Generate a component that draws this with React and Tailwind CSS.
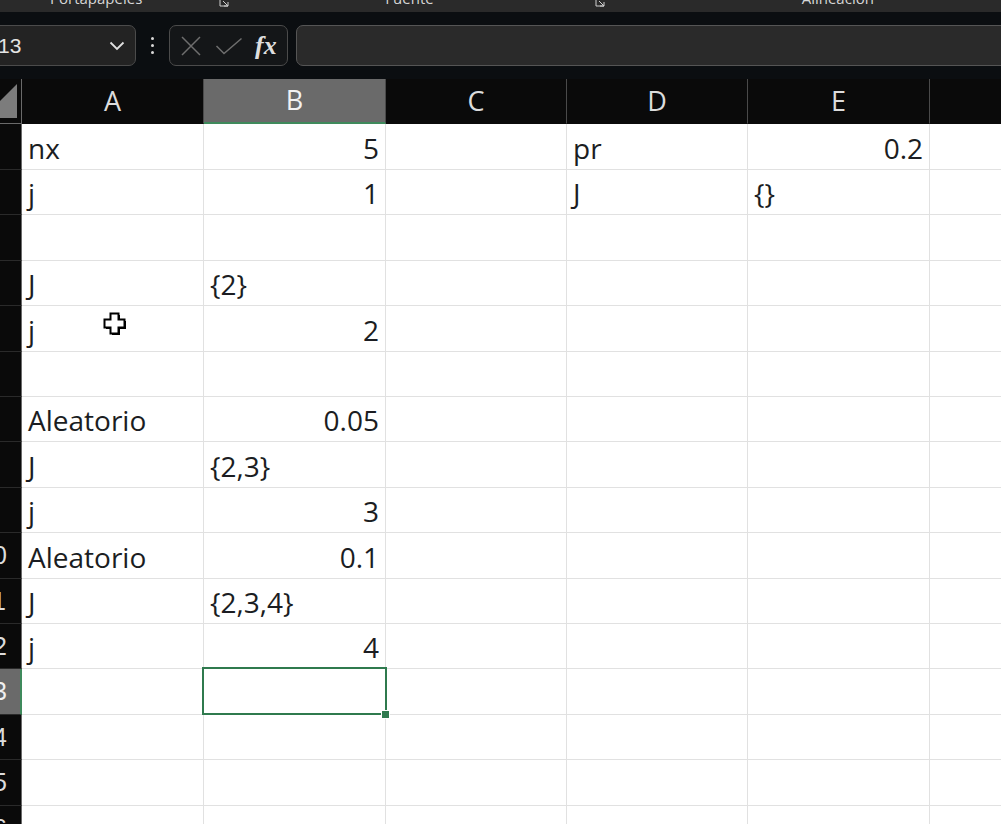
import React from "react";

const COLS = [
  { key: "A", w: "w-[182px]" },
  { key: "B", w: "w-[182px]" },
  { key: "C", w: "w-[181px]" },
  { key: "D", w: "w-[181px]" },
  { key: "E", w: "w-[182px]" },
  { key: "F", w: "w-[93px]" },
];

const HEIGHTS = [46, 45, 46, 45, 46, 45, 45, 46, 45, 46, 45, 45, 46, 45, 46, 45];

const DATA = {
  1: { A: ["nx", "l"], B: ["5", "r"], D: ["pr", "l"], E: ["0.2", "r"] },
  2: { A: ["j", "l"], B: ["1", "r"], D: ["J", "l"], E: ["{}", "l"] },
  4: { A: ["J", "l"], B: ["{2}", "l"] },
  5: { A: ["j", "l"], B: ["2", "r"] },
  7: { A: ["Aleatorio", "l"], B: ["0.05", "r"] },
  8: { A: ["J", "l"], B: ["{2,3}", "l"] },
  9: { A: ["j", "l"], B: ["3", "r"] },
  10: { A: ["Aleatorio", "l"], B: ["0.1", "r"] },
  11: { A: ["J", "l"], B: ["{2,3,4}", "l"] },
  12: { A: ["j", "l"], B: ["4", "r"] },
};

function Launcher() {
  return (
    <svg width="12" height="12" viewBox="0 0 12 12" className="text-[#cfcfcf]">
      <path d="M2 2 V10 H10" fill="none" stroke="currentColor" strokeWidth="1" />
      <path d="M5 5 L10 10 M10 6 V10 H6" fill="none" stroke="currentColor" strokeWidth="1" />
    </svg>
  );
}

function CrossCursor() {
  return (
    <svg width="26" height="26" viewBox="0 0 26 26">
      <path
        d="M8.5 2.5 H16.5 V8.5 H22.5 V16.5 H16.5 V22.5 H8.5 V16.5 H2.5 V8.5 H8.5 Z"
        fill="#000"
        transform="translate(1.5 1.5)"
      />
      <path
        d="M8.5 2.5 H16.5 V8.5 H22.5 V16.5 H16.5 V22.5 H8.5 V16.5 H2.5 V8.5 H8.5 Z"
        fill="#fff"
        stroke="#000"
        strokeWidth="2"
      />
    </svg>
  );
}

export default function App() {
  return (
    <div
      className="w-[1001px] h-[824px] overflow-hidden bg-[#0b0e11] flex flex-col"
      style={{ fontFamily: "'Open Sans', 'Liberation Sans', sans-serif" }}
    >
      {/* ribbon group labels (cut off) */}
      <div className="h-[12px] shrink-0 bg-[#2a2a2a] overflow-hidden">
        <div className="flex items-center -mt-[12px] text-[15px] leading-[20px] text-[#d6d6d6] whitespace-nowrap">
          <span className="ml-[50px]">Portapapeles</span>
          <span className="ml-[76px] mt-[8px]"><Launcher /></span>
          <span className="ml-[155px]">Fuente</span>
          <span className="ml-[160px] mt-[8px]"><Launcher /></span>
          <span className="ml-[196px]">Alineación</span>
        </div>
      </div>

      {/* formula bar */}
      <div className="h-[13px] shrink-0" />
      <div className="h-[41px] shrink-0 flex items-stretch">
        <div className="w-[137px] -ml-[1px] shrink-0 flex items-center justify-between border border-[#4b4b4b] rounded-r-[7px] bg-[#232323] pr-[10px]">
          <span className="text-[21px] text-[#e4e4e4] leading-none -ml-[2px]" style={{ fontFamily: "'Liberation Sans', sans-serif" }}>13</span>
          <svg width="16" height="10" viewBox="0 0 16 10">
            <path d="M1.5 1.5 L8 8 L14.5 1.5" fill="none" stroke="#e0e0e0" strokeWidth="1.8" />
          </svg>
        </div>
        <div className="w-[33px] shrink-0 flex flex-col items-center justify-center gap-[4px]">
          <span className="w-[3px] h-[3px] bg-[#d8d8d8] rounded-full" />
          <span className="w-[3px] h-[3px] bg-[#d8d8d8] rounded-full" />
          <span className="w-[3px] h-[3px] bg-[#d8d8d8] rounded-full" />
        </div>
        <div className="w-[119px] shrink-0 flex items-center border border-[#4b4b4b] rounded-[7px] bg-[#141618] pl-[10px]">
          <svg width="22" height="20" viewBox="0 0 22 20">
            <path d="M2 1 L20 19 M20 1 L2 19" fill="none" stroke="#6e6e6e" strokeWidth="1.5" />
          </svg>
          <svg width="28" height="18" viewBox="0 0 28 18" className="ml-[13px]">
            <path d="M1.5 9 L9 16.5 L26.5 1.5" fill="none" stroke="#6e6e6e" strokeWidth="1.5" />
          </svg>
          <span
            className="ml-[12px] text-[26px] italic font-bold text-[#dedede] leading-none"
            style={{ fontFamily: "'Liberation Serif', serif" }}
          >
            fx
          </span>
        </div>
        <div className="ml-[8px] flex-1 -mr-[10px] border border-[#555] rounded-l-[7px] bg-[#2a2a2a]" />
      </div>
      <div className="h-[13px] shrink-0" />

      {/* grid */}
      <div className="flex-1 flex flex-col overflow-hidden">
        {/* column header */}
        <div className="h-[45px] shrink-0 flex bg-[#0a0a0a]">
          <div className="w-[22px] shrink-0 relative border-r border-[#6a6a6a] border-b">
            <svg width="22" height="44" viewBox="0 0 22 44" className="absolute left-0 top-0">
              <path d="M17 5 L17 39 L0 39 L0 22 Z" fill="#7c7c7c" />
            </svg>
          </div>
          {COLS.map((c, i) => (
            <div
              key={c.key}
              className={`${c.w} shrink-0 flex items-center justify-center text-[27px] leading-none ${
                c.key === "B"
                  ? "bg-[#6a6a6a] text-[#f2f2f2] border-b-[2px] border-[#3f8a5c]"
                  : "text-[#dcdcdc] border-b border-[#0a0a0a]"
              } ${i < COLS.length - 1 ? "border-r border-r-[#4a4a4a]" : ""}`}
            >
              <span className="-mt-[2px]">{c.key === "F" ? "" : c.key}</span>
            </div>
          ))}
        </div>

        {/* rows */}
        {HEIGHTS.map((h, idx) => {
          const r = idx + 1;
          const row = DATA[r] || {};
          const selRow = r === 13;
          return (
            <div key={r} className={`${h === 46 ? "h-[46px]" : "h-[45px]"} shrink-0 flex`}>
              <div
                className={`w-[22px] shrink-0 overflow-hidden flex items-center border-b border-b-[#2a2a2a] ${
                  selRow ? "bg-[#6a6a6a] border-r-[2px] border-r-[#3f8a5c]" : "bg-[#0a0a0a] border-r border-r-[#6a6a6a]"
                }`}
              >
                <span
                  className={`w-[40px] -ml-[27px] shrink-0 text-center text-[25px] leading-none ${
                    selRow ? "text-[#f0f0f0]" : "text-[#dcdcdc]"
                  }`}
                  style={{ fontFamily: "'Liberation Sans', sans-serif" }}
                >
                  {r}
                </span>
              </div>
              {COLS.map((c) => {
                const v = row[c.key];
                const selected = r === 13 && c.key === "B";
                return (
                  <div
                    key={c.key}
                    className={`${c.w} shrink-0 relative bg-white border-r border-b border-[#e1e1e1] flex items-end pb-[7px] px-[6px] ${
                      v && v[1] === "r" ? "justify-end" : "justify-start"
                    } ${selected ? "z-10" : ""}`}
                  >
                    {v && (
                      <span className="text-[28px] leading-none text-[#1b1d22] whitespace-nowrap">{v[0]}</span>
                    )}
                    {r === 5 && c.key === "A" && (
                      <div className="absolute left-[80px] top-[5px]">
                        <CrossCursor />
                      </div>
                    )}
                    {selected && (
                      <>
                        <div className="absolute -left-[2px] -top-[2px] -right-[2px] -bottom-[1px] border-2 border-[#2f7a4e]" />
                        <div className="absolute -right-[5px] -bottom-[5px] w-[9px] h-[9px] bg-[#2f7a4e] border border-white" />
                      </>
                    )}
                  </div>
                );
              })}
            </div>
          );
        })}
      </div>
    </div>
  );
}
